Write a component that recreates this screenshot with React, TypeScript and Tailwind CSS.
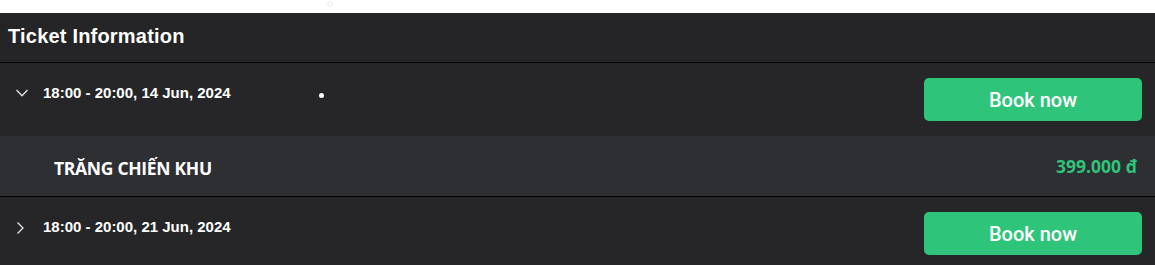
import React from "react";

function ChevronDown() {
  return (
    <svg width="14" height="10" viewBox="0 0 14 10" className="block">
      <path d="M1.5 2 L7 7.8 L12.5 2" fill="none" stroke="#e5e5e5" strokeWidth="1.3" />
    </svg>
  );
}

function ChevronRight() {
  return (
    <svg width="10" height="14" viewBox="0 0 10 14" className="block">
      <path d="M2.5 1.5 L8 7 L2.5 12.5" fill="none" stroke="#e5e5e5" strokeWidth="1.3" />
    </svg>
  );
}

function BookButton() {
  return (
    <button className="w-[218px] h-[43px] rounded-[5px] bg-[#2ec47a] text-white text-[20px] font-medium font-['Roboto',Arial,sans-serif] flex items-center justify-center">
      Book now
    </button>
  );
}

function DateRow({ open, label, dot }: { open: boolean; label: string; dot?: boolean }) {
  return (
    <div className="h-[73px] shrink-0 bg-[#262628] flex items-center pr-[13px]">
      <div className={open ? "w-[43px] flex justify-center pl-[1px] pb-[14px]" : "w-[43px] flex justify-center pr-[4px] pb-[12px]"}>
        {open ? <ChevronDown /> : <ChevronRight />}
      </div>
      <span className="text-white text-[15px] font-bold font-['Liberation_Sans',Arial,sans-serif] pb-[12px]">
        {label}
      </span>
      {dot && <div className="ml-[88px] w-[5px] h-[5px] rounded-full bg-white mb-[9px]" />}
      <div className="ml-auto">
        <BookButton />
      </div>
    </div>
  );
}

export default function App() {
  return (
    <div className="w-[1155px] h-[265px] bg-white flex flex-col overflow-hidden">
      <div className="h-[13px] shrink-0 relative">
        <svg className="absolute left-[327px] top-[1px]" width="6" height="6" viewBox="0 0 6 6">
          <circle cx="3" cy="3" r="2.2" fill="none" stroke="#d0d0d0" strokeWidth="0.8" strokeDasharray="1 1" />
        </svg>
      </div>
      <div className="h-[50px] shrink-0 bg-[#252527] flex items-center pl-[8px] pb-[4px] border-b border-black">
        <span className="text-white text-[20px] font-bold font-['Liberation_Sans',Arial,sans-serif] tracking-[0.2px]">
          Ticket Information
        </span>
      </div>
      <DateRow open label="18:00 - 20:00, 14 Jun, 2024" dot />
      <div className="h-[61px] shrink-0 bg-[#2e2f33] flex items-center pl-[54px] pr-[18px] border-b border-black">
        <span className="text-white text-[17.5px] font-bold font-['Open_Sans','Noto_Sans',sans-serif] tracking-[-0.3px] pt-[4px]">
          TRĂNG CHIẾN KHU
        </span>
        <span className="ml-auto text-[#2ec47a] text-[17.5px] font-bold font-['Open_Sans','Noto_Sans',sans-serif]">
          399.000 đ
        </span>
      </div>
      <DateRow open={false} label="18:00 - 20:00, 21 Jun, 2024" />
    </div>
  );
}
